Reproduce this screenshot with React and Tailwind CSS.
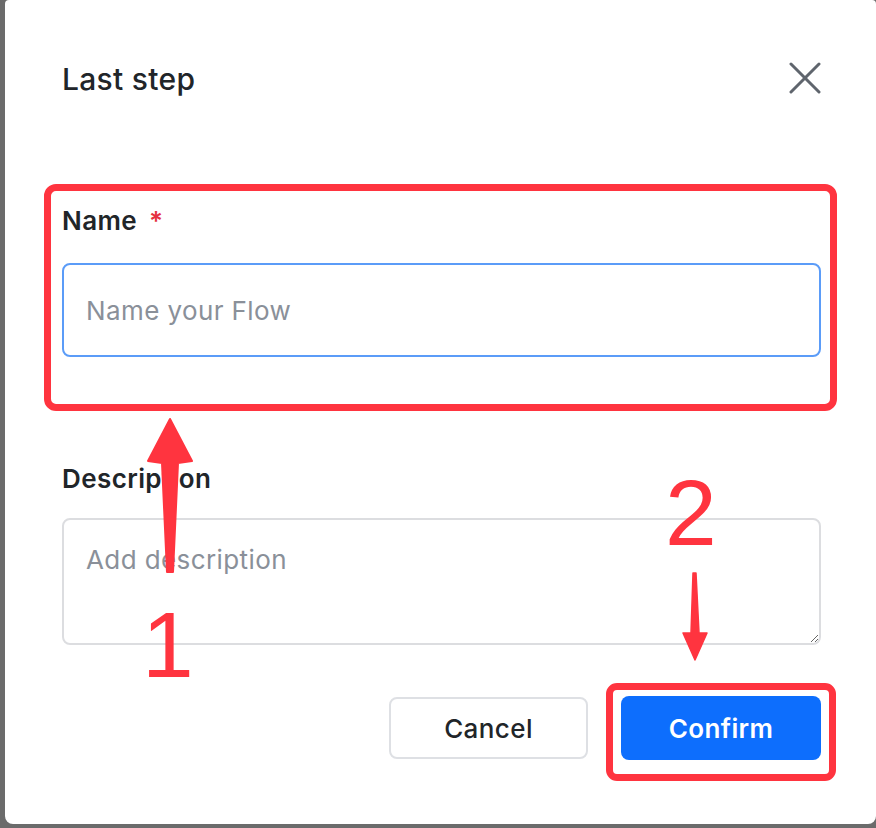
import React from "react";

export default function App() {
  return (
    <div className="relative w-[876px] h-[828px] bg-[#6b6b6b] pl-[5px] pb-[4px] flex overflow-hidden" style={{ fontFamily: "Inter, 'Noto Sans', sans-serif" }}>
      <div className="flex-1 bg-white rounded-tl-[4px] rounded-tr-[4px] rounded-bl-[8px] rounded-br-[8px] flex flex-col pl-[57px] pr-[55px]">
        <div className="mt-[60px] h-[38px] flex items-center justify-between">
          <h2 className="text-[30px] leading-[38px] font-medium text-[#212529] tracking-[0.3px]">Last step</h2>
          <button className="w-[32px] h-[32px] flex items-center justify-center -mt-[2px]">
            <svg width="32" height="32" viewBox="0 0 32 32" fill="none" stroke="#5f656d" strokeWidth="3" strokeLinecap="round">
              <line x1="2" y1="2" x2="30" y2="30" />
              <line x1="30" y1="2" x2="2" y2="30" />
            </svg>
          </button>
        </div>

        <label className="mt-[107px] h-[32px] text-[26px] leading-[32px] font-semibold text-[#212529] tracking-[0.4px] flex items-center">
          Name
          <span className="ml-[12px] text-[#e5323f]">*</span>
        </label>
        <input
          className="mt-[26px] h-[94px] w-full rounded-[8px] border-2 border-[#5b9cf8] px-[22px] text-[26px] tracking-[0.4px] text-[#212529] placeholder:text-[#8a9099] outline-none"
          placeholder="Name your Flow"
        />

        <label className="mt-[106px] h-[32px] text-[26px] leading-[32px] font-semibold tracking-[0.4px] text-[#212529]">Description</label>
        <textarea
          className="mt-[23px] h-[127px] w-full rounded-[8px] border-2 border-[#dcdde0] px-[22px] pt-[22px] text-[26px] leading-[36px] tracking-[0.4px] text-[#212529] placeholder:text-[#8a9099] outline-none"
          placeholder="Add description"
        />

        <div className="mt-[51px] flex justify-end items-center gap-[33px]">
          <button className="w-[199px] h-[62px] rounded-[8px] border-2 border-[#dee0e4] bg-white text-[26px] font-medium tracking-[0.4px] text-[#212529]">Cancel</button>
          <button className="w-[200px] h-[64px] rounded-[8px] bg-[#0d6efd] text-[26px] font-semibold tracking-[0.4px] text-white">Confirm</button>
        </div>
      </div>

      {/* annotations */}
      <div className="absolute left-[44px] top-[184px] w-[793px] h-[227px] border-[7px] border-[#ff343f] rounded-[12px] pointer-events-none" />
      <div className="absolute left-[606px] top-[683px] w-[230px] h-[98px] border-[7px] border-[#ff343f] rounded-[11px] pointer-events-none" />
      <svg className="absolute left-0 top-0 pointer-events-none" width="876" height="828" viewBox="0 0 876 828">
        <polygon
          points="170,419 192,461 178,463 173,572 167,572 162,463 148,461"
          fill="#ff343f"
          stroke="#ff343f"
          strokeWidth="2"
          strokeLinejoin="round"
        />
        <polygon
          points="693,573 696,573 699,633 707,633 695,660 683,633 691,633"
          fill="#ff343f"
          stroke="#ff343f"
          strokeWidth="1.5"
          strokeLinejoin="round"
        />
      </svg>
      <div className="absolute left-[142px] top-[599px] text-[93px] leading-none text-[#ff343f] pointer-events-none" style={{ fontFamily: "'Liberation Sans', Arial, sans-serif" }}>1</div>
      <div className="absolute left-[665px] top-[467px] text-[93px] leading-none text-[#ff343f] pointer-events-none" style={{ fontFamily: "'Liberation Sans', Arial, sans-serif" }}>2</div>
    </div>
  );
}
